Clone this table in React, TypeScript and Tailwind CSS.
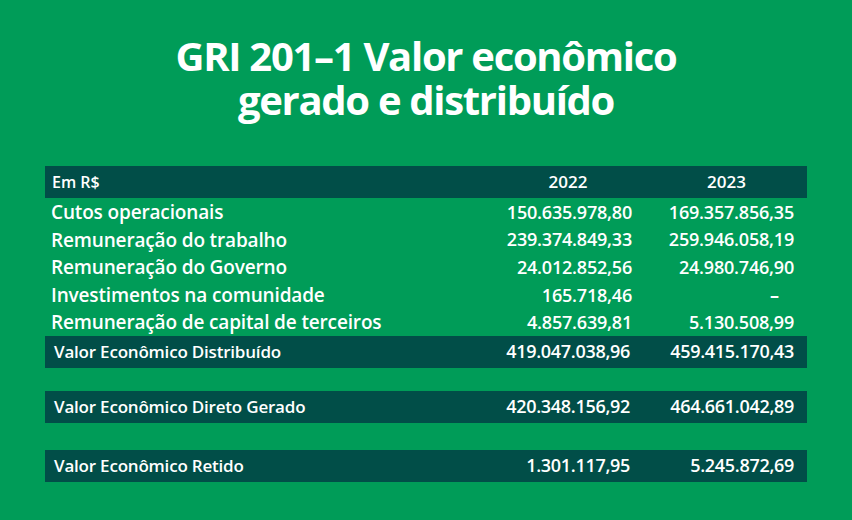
const rows = [
  { label: 'Cutos operacionais', y2022: '150.635.978,80', y2023: '169.357.856,35' },
  { label: 'Remuneração do trabalho', y2022: '239.374.849,33', y2023: '259.946.058,19' },
  { label: 'Remuneração do Governo', y2022: '24.012.852,56', y2023: '24.980.746,90' },
  { label: 'Investimentos na comunidade', y2022: '165.718,46', y2023: '–' },
  { label: 'Remuneração de capital de terceiros', y2022: '4.857.639,81', y2023: '5.130.508,99' },
];

const font = { fontFamily: '"Open Sans", "Noto Sans", sans-serif' };

function Band({ label, a, b }: { label: string; a: string; b: string }) {
  return (
    <div className="grid h-[32px] grid-cols-[1fr_156px_161px] items-center bg-[#014e48] font-semibold">
      <span className="pl-[9px] text-[17px] tracking-[-0.2px]">{label}</span>
      <span className="pr-[16px] text-right text-[18px] tracking-[-0.3px]">{a}</span>
      <span className="pr-[13px] text-right text-[18px] tracking-[-0.3px]">{b}</span>
    </div>
  );
}

export default function App() {
  return (
    <div className="flex h-[520px] w-[852px] flex-col bg-[#009c58] text-white" style={font}>
      <h1 className="flex flex-col items-center pt-[34px] text-[40px] font-bold leading-[44px] tracking-[-1.3px]">
        <span className="block h-[44px]">GRI 201–1 Valor econômico</span>
        <span className="block h-[44px]">gerado e distribuído</span>
      </h1>

      <div className="mx-[45px] mt-[44px] flex flex-col">
        <div className="grid h-[32px] grid-cols-[1fr_156px_161px] items-center bg-[#014e48] font-semibold">
          <span className="pl-[7px] text-[16px]">Em R$</span>
          <span className="text-center text-[17px]">2022</span>
          <span className="text-center text-[17px]">2023</span>
        </div>

        {rows.map((r) => (
          <div
            key={r.label}
            className="grid h-[27.6px] grid-cols-[1fr_156px_161px] items-center font-semibold"
          >
            <span className="pl-[6px] text-[19px] tracking-[-0.15px]">{r.label}</span>
            <span className="pr-[14px] text-right text-[18px] tracking-[-0.2px]">{r.y2022}</span>
            <span
              className={
                r.y2023 === '–'
                  ? 'pr-[28px] text-right text-[18px] font-bold'
                  : 'pr-[13px] text-right text-[18px] tracking-[-0.2px]'
              }
            >
              {r.y2023}
            </span>
          </div>
        ))}

        <Band label="Valor Econômico Distribuído" a="419.047.038,96" b="459.415.170,43" />
        <div className="h-[23px]" />
        <Band label="Valor Econômico Direto Gerado" a="420.348.156,92" b="464.661.042,89" />
        <div className="h-[27px]" />
        <Band label="Valor Econômico Retido" a="1.301.117,95" b="5.245.872,69" />
      </div>
    </div>
  );
}
